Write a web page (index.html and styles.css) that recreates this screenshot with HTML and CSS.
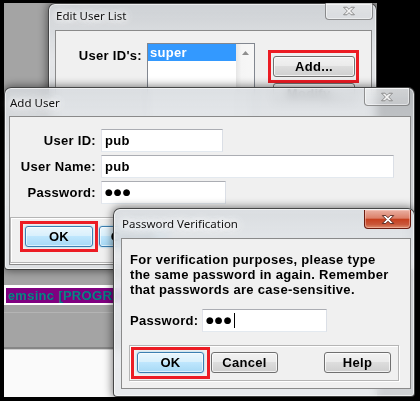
FILE: index.html
```html
<!DOCTYPE html>
<html>
<head>
<meta charset="utf-8">
<title>Add User</title>
<link rel="stylesheet" href="styles.css">
</head>
<body>
<div class="screen">
  <div class="app">
    <div class="app-space"></div>
    <div class="app-tabs"><span class="app-tab">emsinc [PROGRESS]</span></div>
    <div class="app-gray"></div>
    <div class="app-bottom"></div>
  </div>

  <section class="win win-edit">
    <div class="titlebar">
      <span class="title">Edit User List</span>
      <span class="close"><svg width="16" height="10" viewBox="0 0 16 12"><path d="M1.5 1.5h4l2.5 2.5 2.5-2.5h4l-4.5 4.5 4.5 4.5h-4l-2.5-2.5-2.5 2.5h-4l4.5-4.5z"/></svg></span>
    </div>
    <div class="client edit-client">
      <span class="label edit-label">User ID's:</span>
      <div class="listbox">
        <div class="list-items"><div class="list-item sel">super</div></div>
        <div class="scrollbar"><svg width="7" height="4" viewBox="0 0 7 4"><path d="M0 4L3.5 0L7 4z"/></svg></div>
      </div>
      <div class="edit-buttons">
        <button class="btn btn-wide mark mark-add">Add...</button>
        <button class="btn btn-wide">Modify...</button>
      </div>
    </div>
  </section>

  <section class="win win-add">
    <div class="titlebar">
      <span class="title">Add User</span>
      <span class="close"><svg width="16" height="10" viewBox="0 0 16 12"><path d="M1.5 1.5h4l2.5 2.5 2.5-2.5h4l-4.5 4.5 4.5 4.5h-4l-2.5-2.5-2.5 2.5h-4l4.5-4.5z"/></svg></span>
    </div>
    <div class="client">
      <div class="add-form">
        <div class="row"><span class="label form-label">User ID:</span><div class="edit edit-id">pub</div></div>
        <div class="row"><span class="label form-label">User Name:</span><div class="edit edit-name">pub</div></div>
        <div class="row"><span class="label form-label">Password:</span><div class="edit edit-pass"><span class="dots">●●●</span></div></div>
      </div>
      <div class="group group-add">
        <button class="btn btn-ok btn-blue mark">OK</button>
        <button class="btn btn-ok btn-blue">Cancel</button>
      </div>
    </div>
  </section>

  <section class="win win-pw">
    <div class="titlebar">
      <span class="title">Password Verification</span>
      <span class="close close-active"><svg width="14" height="11" viewBox="0 0 16 12"><path d="M1.5 1.5h4l2.5 2.5 2.5-2.5h4l-4.5 4.5 4.5 4.5h-4l-2.5-2.5-2.5 2.5h-4l4.5-4.5z"/></svg></span>
    </div>
    <div class="client">
      <p class="pw-text">For verification purposes, please type<br>the same password in again. Remember<br>that passwords are case-sensitive.</p>
      <div class="pw-row">
        <span class="label pw-label">Password:</span>
        <div class="edit edit-verify"><span class="dots">●●●</span><span class="caret"></span></div>
      </div>
      <div class="group group-pw">
        <button class="btn btn-blue mark mark-pw">OK</button>
        <button class="btn">Cancel</button>
        <button class="btn btn-help">Help</button>
      </div>
    </div>
  </section>
</div>
</body>
</html>
```
FILE: styles.css
```css
* { box-sizing: border-box; margin: 0; padding: 0; }
html, body { width: 420px; height: 401px; overflow: hidden; background: #000; }
body { font-family: "Liberation Sans", Arial, sans-serif; color: #000; }

.screen { position: relative; width: 420px; height: 401px; background: #000; overflow: hidden; }

/* background application */
.app { position: absolute; left: 4px; top: 3px; width: 373px; height: 394px; display: flex; flex-direction: column; background: #a4a4a4; }
.app-space { height: 282px; }
.app-tabs { height: 20px; background: #fff; padding: 3px 0 2px 2px; display: flex; }
.app-tab { background: #800080; color: #008080; font-weight: bold; font-size: 13px; line-height: 15px; letter-spacing: .3px; padding: 0 2px; white-space: nowrap; }
.app-gray { height: 42px; background: linear-gradient(#a4a4a4 7px, #b4b4b4 7px, #b4b4b4 8px, #a4a4a4 8px); }
.app-bottom { flex: 1; background: #fafafa; border-top: 2px solid #868686; box-shadow: inset 0 1px 0 #d0d0d0; }

/* windows */
.win { position: absolute; display: flex; flex-direction: column; border: 1px solid rgba(30, 30, 30, .8); border-radius: 7px 7px 4px 4px; background: linear-gradient(180deg, rgba(214, 218, 222, .84), rgba(236, 238, 241, .88) 40%, rgba(228, 231, 234, .9)); backdrop-filter: blur(4px); box-shadow: 0 0 9px 1px rgba(0, 0, 0, .5), inset 0 0 0 1px rgba(255, 255, 255, .6); }
.titlebar { display: flex; justify-content: space-between; align-items: flex-start; flex: none; }
.title { align-self: center; font-family: "Noto Sans", sans-serif; font-size: 11.5px; color: #111; padding-left: 1px; white-space: nowrap; text-shadow: 0 0 5px #fff, 0 0 9px #fff, 0 0 12px #fff; }
.close { display: flex; align-items: center; justify-content: center; border: 1px solid rgba(70, 70, 70, .55); border-top: none; border-radius: 0 0 4px 4px; background: linear-gradient(rgba(255, 255, 255, .4), rgba(255, 255, 255, .15)); box-shadow: inset 0 0 0 1px rgba(255, 255, 255, .5); }
.close svg path { fill: #f4f4f4; stroke: #7b7b7b; stroke-width: 1; }
.close-active { background: linear-gradient(#eab0a2 0%, #dc8069 45%, #c6401f 52%, #c9573a 80%, #dd8f70 100%); border-color: #6a1c10; box-shadow: inset 0 0 0 1px rgba(255, 210, 200, .45); }
.close-active svg path { fill: #fff; stroke: #4a1a12; }

.client { flex: 1; background: #f0f0f0; border: 1px solid #8a8a8a; display: flex; flex-direction: column; overflow: hidden; }

.label { font-weight: bold; font-size: 13px; letter-spacing: .3px; text-align: right; white-space: nowrap; }

/* buttons */
.btn { position: relative; width: 67px; height: 21px; flex: none; border: 1px solid #707070; border-radius: 3px; background: linear-gradient(#f2f2f2 0%, #ebebeb 45%, #dddddd 50%, #cfcfcf 100%); box-shadow: inset 0 0 0 1px rgba(255, 255, 255, .7); font-family: "Liberation Sans", Arial, sans-serif; font-weight: bold; font-size: 13px; line-height: 19px; letter-spacing: .3px; color: #000; text-align: center; }
.btn-blue { border-color: #3c7fb1; background: linear-gradient(#eaf6fd 0%, #d9f0fc 45%, #bee6fd 50%, #a7d9f5 100%); box-shadow: inset 0 0 0 1px rgba(255, 255, 255, .6), 0 0 2px #7ec4ea; }
.btn-wide { width: 82px; }
.btn-ok { width: 68px; }

/* red annotation rectangle drawn over the button */
.mark::after { content: ""; position: absolute; top: -6px; right: -6px; bottom: -6px; left: -6px; border: 3px solid #ec1c24; pointer-events: none; }
.mark-add::after { top: -7px; bottom: -7px; left: -6px; right: -5px; }
.mark-pw::after { top: -6px; bottom: -7px; left: -7px; right: -7px; }

/* Edit User List */
.win-edit { left: 48px; top: 3px; width: 329px; height: 140px; padding: 0 4px 4px 6px; }
.win-edit .titlebar { height: 26px; }
.win-edit .title { margin-bottom: 3px; }
.win-edit .close { width: 48px; height: 17px; margin: -1px -1px 0 0; }
.edit-client { flex-direction: row; align-items: flex-start; padding-top: 12px; }
.edit-label { width: 86px; margin-top: 4px; line-height: 17px; }
.listbox { margin-left: 5px; width: 108px; height: 110px; border: 1px solid #828790; background: #fff; display: flex; }
.list-items { flex: 1; }
.list-item { height: 17px; line-height: 17px; padding-left: 2px; font-weight: bold; font-size: 13px; letter-spacing: .3px; }
.sel { background: #3399ff; color: #fff; }
.scrollbar { width: 18px; background: linear-gradient(90deg, #e6e6e6, #f5f5f5 30%, #f7f7f7); display: flex; justify-content: center; align-items: flex-start; padding-top: 7px; }
.scrollbar svg path { fill: #8e8e8e; }
.edit-buttons { display: flex; flex-direction: column; gap: 6px; margin: 13px 0 0 18px; }

/* Add User */
.win-add { left: 4px; top: 87px; width: 411px; height: 183px; padding: 0 3px 4px 4px; }
.win-add .titlebar { height: 28px; }
.win-add .close { width: 46px; height: 18px; margin-right: 1px; }
.add-form { display: flex; flex-direction: column; gap: 3px; padding-top: 12px; }
.row { display: flex; align-items: center; gap: 5px; }
.form-label { width: 86px; }
.edit { height: 23px; background: #fff; border: 1px solid; border-color: #abadb3 #dbdfe6 #e3e9ef #e2e3ea; padding-left: 3px; font-weight: bold; font-size: 13px; line-height: 21px; letter-spacing: .3px; white-space: nowrap; display: flex; align-items: center; }
.edit-id { width: 122px; }
.edit-name { width: 293px; }
.edit-pass { width: 125px; }
.dots { font-family: "DejaVu Sans", sans-serif; font-size: 9px; letter-spacing: 1px; font-weight: bold; }
.caret { width: 1px; height: 15px; background: #000; margin-left: 1px; }
.group { border: 1px solid #b5b5b5; box-shadow: inset 1px 1px 0 #fff, 1px 1px 0 #fff; display: flex; align-items: flex-start; }
.group-add { margin: 13px 2px 0 0; height: 46px; padding: 8px 0 0 14px; gap: 6px; }

/* Password Verification */
.win-pw { left: 113px; top: 208px; width: 302px; height: 189px; padding: 0 3px 7px 7px; }
.win-pw .titlebar { height: 29px; }
.win-pw .close { width: 47px; height: 19px; margin-top: 1px; }
.pw-text { margin: 13px 0 0 8px; font-weight: bold; font-size: 13px; line-height: 15px; letter-spacing: .3px; white-space: nowrap; }
.pw-row { margin: 12px 0 0 8px; display: flex; align-items: center; }
.pw-label { width: 72px; text-align: left; }
.edit-verify { width: 125px; }
.group-pw { margin: 13px 0 0 7px; width: 270px; height: 36px; padding: 6px 7px 0 7px; gap: 7px; }
.btn-help { margin-left: auto; }
```
